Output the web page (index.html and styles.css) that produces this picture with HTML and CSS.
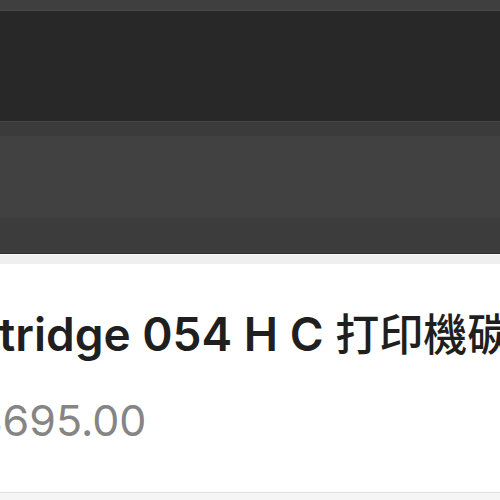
FILE: index.html
```html
<!DOCTYPE html>
<html lang="zh-Hant">
<head>
<meta charset="utf-8">
<title>Cartridge 054 H C</title>
<link rel="stylesheet" href="styles.css">
</head>
<body>
<div class="page">
  <div class="topbar"></div>
  <div class="hero"></div>
  <div class="subbar"></div>
  <div class="panel"></div>
  <div class="panel-foot"></div>
  <div class="card">
    <div class="card-edge"></div>
    <div class="card-body">
      <h1 class="title">tridge 054 H C <span class="cjk">打印機碳</span></h1>
      <p class="price">$695.00</p>
    </div>
  </div>
  <div class="footer"></div>
</div>
</body>
</html>
```
FILE: styles.css
```css
html, body {
  margin: 0;
  padding: 0;
  background: #f5f5f5;
}
body {
  width: 500px;
  height: 500px;
  overflow: hidden;
  font-family: Inter, "Noto Sans CJK TC", sans-serif;
}
.page {
  display: flex;
  flex-direction: column;
  width: 500px;
}
.topbar {
  height: 10px;
  background: #3f3f3f;
  border-bottom: 1px solid #474747;
}
.hero {
  height: 110px;
  background: #282828;
  border-bottom: 1px solid #444444;
}
.subbar {
  height: 14px;
  background: #3b3b3b;
}
.panel {
  height: 82px;
  background: #414141;
}
.panel-foot {
  height: 35px;
  background: #3c3c3c;
  border-bottom: 1px solid #2e2e2e;
}
.card {
  background: #ffffff;
  border-bottom: 1px solid #e0e0e0;
  display: flex;
  flex-direction: column;
}
.card-edge {
  height: 9px;
  background: #efefef;
  border-top: 1px solid #f8f8f8;
}
.card-body {
  height: 228px;
  display: flex;
  flex-direction: column;
  overflow: hidden;
}
.title {
  margin: 42px 0 0 0;
  font-size: 46px;
  line-height: 52px;
  font-weight: 600;
  color: #1f1f1f;
  white-space: nowrap;
  text-indent: -1px;
}
.cjk {
  font-family: "Noto Sans CJK TC", sans-serif;
  font-size: 44px;
  font-weight: 500;
}
.price {
  margin: 34px 0 0 0;
  font-size: 43px;
  line-height: 52px;
  font-weight: 400;
  color: #858585;
  white-space: nowrap;
  text-indent: -25px;
}
.footer {
  height: 8px;
  background: #f5f5f5;
}
```
